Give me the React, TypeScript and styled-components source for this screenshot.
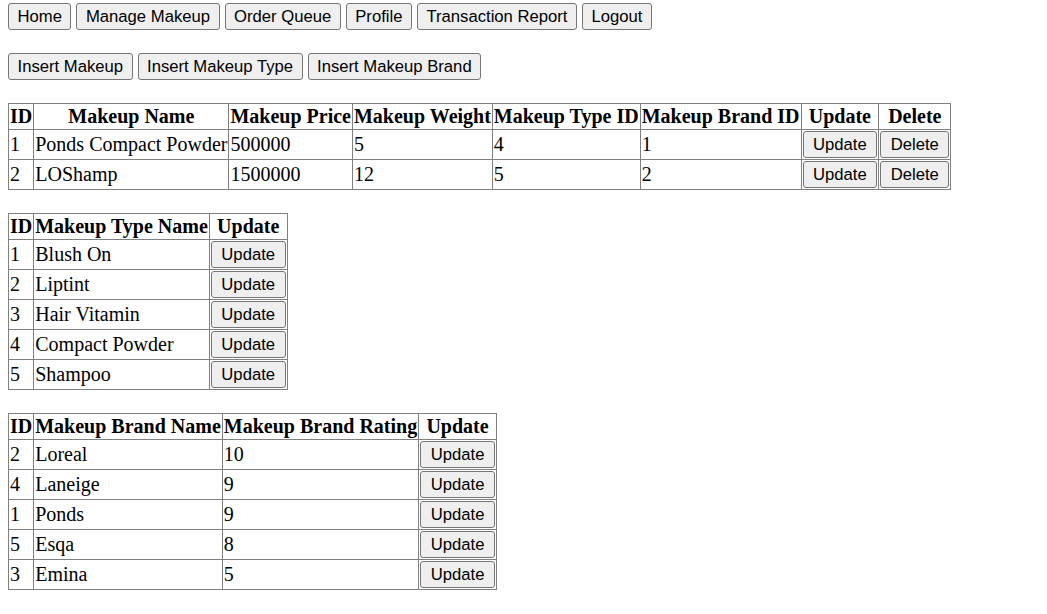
import React from "react";
import styled, { createGlobalStyle } from "styled-components";

const Global = createGlobalStyle`
  html, body { margin: 0; padding: 0; background: #ffffff; }
  body { font-family: "Liberation Serif", "Times New Roman", serif; font-size: 20px; color: #000; }
`;

const Page = styled.div`
  display: flex;
  flex-direction: column;
  align-items: flex-start;
  gap: 23px;
  padding: 3px 8px 0 8px;
`;

const ButtonRow = styled.div`
  display: flex;
  gap: 5px;
`;

const Btn = styled.button<{ $inCell?: boolean }>`
  font-family: "Liberation Sans", Arial, sans-serif;
  font-size: 16.67px;
  line-height: 19px;
  height: 27px;
  padding: ${(p) => (p.$inCell ? "1px 9.5px" : "1px 8.5px")};
  color: #000;
  background: #efefef;
  border: 1px solid #767676;
  border-radius: 3px;
  cursor: pointer;
  white-space: nowrap;
`;

const Table = styled.table`
  border-collapse: collapse;
  border: 1px solid #808080;
`;

const Th = styled.th`
  border: 1px solid #808080;
  padding: 1px;
  font-weight: bold;
  text-align: center;
  line-height: 23px;
  white-space: nowrap;
`;

const Td = styled.td`
  border: 1px solid #808080;
  padding: 1px;
  line-height: 23px;
  vertical-align: middle;
  white-space: nowrap;
`;

const nav = ["Home", "Manage Makeup", "Order Queue", "Profile", "Transaction Report", "Logout"];
const inserts = ["Insert Makeup", "Insert Makeup Type", "Insert Makeup Brand"];

const makeups = [
  { id: 1, name: "Ponds Compact Powder", price: 500000, weight: 5, type: 4, brand: 1 },
  { id: 2, name: "LOShamp", price: 1500000, weight: 12, type: 5, brand: 2 },
];

const types = [
  { id: 1, name: "Blush On" },
  { id: 2, name: "Liptint" },
  { id: 3, name: "Hair Vitamin" },
  { id: 4, name: "Compact Powder" },
  { id: 5, name: "Shampoo" },
];

const brands = [
  { id: 2, name: "Loreal", rating: 10 },
  { id: 4, name: "Laneige", rating: 9 },
  { id: 1, name: "Ponds", rating: 9 },
  { id: 5, name: "Esqa", rating: 8 },
  { id: 3, name: "Emina", rating: 5 },
];

export default function App() {
  return (
    <>
      <Global />
      <Page>
        <ButtonRow>
          {nav.map((n) => (
            <Btn key={n}>{n}</Btn>
          ))}
        </ButtonRow>
        <ButtonRow>
          {inserts.map((n) => (
            <Btn key={n}>{n}</Btn>
          ))}
        </ButtonRow>

        <Table>
          <thead>
            <tr>
              <Th>ID</Th>
              <Th>Makeup Name</Th>
              <Th>Makeup Price</Th>
              <Th>Makeup Weight</Th>
              <Th>Makeup Type ID</Th>
              <Th>Makeup Brand ID</Th>
              <Th>Update</Th>
              <Th>Delete</Th>
            </tr>
          </thead>
          <tbody>
            {makeups.map((m) => (
              <tr key={m.id}>
                <Td>{m.id}</Td>
                <Td>{m.name}</Td>
                <Td>{m.price}</Td>
                <Td>{m.weight}</Td>
                <Td>{m.type}</Td>
                <Td>{m.brand}</Td>
                <Td><Btn $inCell>Update</Btn></Td>
                <Td><Btn $inCell>Delete</Btn></Td>
              </tr>
            ))}
          </tbody>
        </Table>

        <Table>
          <thead>
            <tr>
              <Th>ID</Th>
              <Th>Makeup Type Name</Th>
              <Th>Update</Th>
            </tr>
          </thead>
          <tbody>
            {types.map((t) => (
              <tr key={t.id}>
                <Td>{t.id}</Td>
                <Td>{t.name}</Td>
                <Td><Btn $inCell>Update</Btn></Td>
              </tr>
            ))}
          </tbody>
        </Table>

        <Table>
          <thead>
            <tr>
              <Th>ID</Th>
              <Th>Makeup Brand Name</Th>
              <Th>Makeup Brand Rating</Th>
              <Th>Update</Th>
            </tr>
          </thead>
          <tbody>
            {brands.map((b) => (
              <tr key={b.id}>
                <Td>{b.id}</Td>
                <Td>{b.name}</Td>
                <Td>{b.rating}</Td>
                <Td><Btn $inCell>Update</Btn></Td>
              </tr>
            ))}
          </tbody>
        </Table>
      </Page>
    </>
  );
}
